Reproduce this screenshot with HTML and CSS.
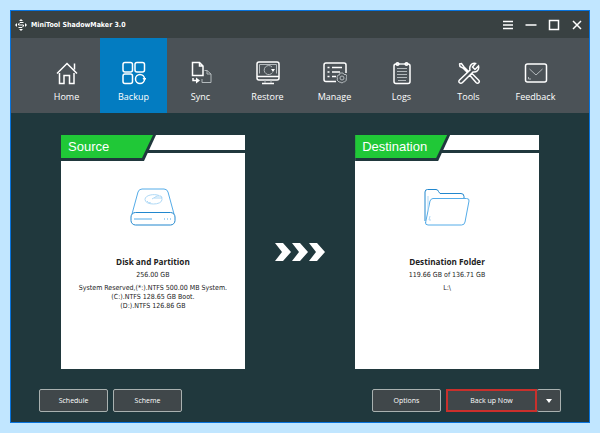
FILE: index.html
```html
<!DOCTYPE html>
<html lang="en">
<head>
<meta charset="utf-8">
<meta name="viewport" content="width=device-width, initial-scale=1">
<title>MiniTool ShadowMaker 3.0</title>
<link rel="stylesheet" href="styles.css">
</head>
<body>
<div class="window">
  <header class="titlebar">
    <svg class="logo" viewBox="0 0 12 12" aria-hidden="true">
      <path class="solid" d="M6 0l2 2H4zM6 12l2-2H4zM0 6l2-2v4zM12 6l-2-2v4z"/>
      <path d="M8.500 3.500H5L3.500 5v1h5v1L7 8.500H3.500"/>
    </svg>
    <h1 class="title">MiniTool ShadowMaker 3.0</h1>
    <div class="controls">
      <button class="control" aria-label="Menu"><svg viewBox="0 0 12 12"><path d="M1 2.500h10M1 6h10M1 9.500h10"/></svg></button>
      <button class="control" aria-label="Minimize"><svg viewBox="0 0 12 12"><path d="M.5 6h11"/></svg></button>
      <button class="control" aria-label="Maximize"><svg viewBox="0 0 12 12"><path d="M1.500 1.500h9v9h-9z"/></svg></button>
      <button class="control" aria-label="Close"><svg viewBox="0 0 12 12"><path d="M2 2l8 8M10 2l-8 8"/></svg></button>
    </div>
  </header>

  <nav class="nav">
    <a class="nav-item" href="#home">
      <svg viewBox="0 0 24 24"><path d="M2 12.500L12 2.500l10 10M19.500 2.500v6M4.500 12v10.500h4.500v-8h5.500v8h4.500V12"/></svg>
      <span>Home</span>
    </a>
    <a class="nav-item active" href="#backup" aria-current="page">
      <svg viewBox="0 0 24 24"><rect x="1" y="1.500" width="9.500" height="9.500" rx="2"/><rect x="13" y="1.500" width="9.500" height="9.500" rx="2"/><rect x="1" y="13" width="9.500" height="9.500" rx="2"/><circle cx="18" cy="18" r="4.500"/><path class="solid" d="M20.500 17H24.500l-2 3z"/></svg>
      <span>Backup</span>
    </a>
    <a class="nav-item" href="#sync">
      <svg viewBox="0 0 24 24"><path d="M3.500 1.500h7L14 5v9.500H3.500zM10.500 1.500V5H14"/><path class="faint" d="M15.500 9.500H18l4 3.500v8.500h-9V18M18 9.500V13h4"/><path d="M4 17v2.500h4"/><path class="solid" d="M7 16.500l4 3-4 3z"/></svg>
      <span>Sync</span>
    </a>
    <a class="nav-item" href="#restore">
      <svg viewBox="0 0 24 24"><rect x="1" y="1" width="22" height="18" rx="2"/><path d="M1 15.500h22M6 22.500h12"/><path class="faint" d="M3.500 12.500v-9h17v9M9 19v3M15 19v3M16 6a4.500 4.500 0 1 0 .5 5.500"/><path class="solid" d="M15 8h4l-2 3z"/></svg>
      <span>Restore</span>
    </a>
    <a class="nav-item" href="#manage">
      <svg viewBox="0 0 24 24"><path d="M13 20.500H3a2 2 0 0 1-2-2V4a2 2 0 0 1 2-2h18a2 2 0 0 1 2 2v8M4.500 6.500h2M9 6.500h10M4.500 11h2M9 11h8M4.500 15.500h2M9 15.500h4"/><path class="faint" d="M17 12h3l1 1.500h2l1 2.500-1 2 .5 1-2 2h-1L19 22l-2-1h-1l-2-2 .5-1-.5-2 1-2h1.500z"/><circle class="faint" cx="19" cy="17" r="2"/></svg>
      <span>Manage</span>
    </a>
    <a class="nav-item" href="#logs">
      <svg viewBox="0 0 24 24"><rect x="4" y="3" width="16" height="19.500" rx="2"/><circle cx="7.500" cy="3" r="1.300"/><circle cx="16.500" cy="3" r="1.300"/><path class="faint" d="M7 7.500h10M7 10.500h10M7 13.500h10M7 16.500h10M8 19.500h8M10 3h4"/></svg>
      <span>Logs</span>
    </a>
    <a class="nav-item" href="#tools">
      <svg viewBox="0 0 24 24"><path d="M2 3l2.500-.5L7 6l4.500 4.500M2.500 3L3 5.500l3 1.500 4.500 4.500M13 14.500l2-2 6.500 6.500c2 2-.5 4.500-2.500 2.500zM2.500 19L13 9c-1-3.500 1.500-7.500 5.500-6.500L15.500 6l2.500 2.500L21.500 5c1 4-2 6.500-5.500 6L5.500 21.500c-2 2-5-.5-3-2.500z"/></svg>
      <span>Tools</span>
    </a>
    <a class="nav-item" href="#feedback">
      <svg viewBox="0 0 24 24"><rect x="1.500" y="3" width="21" height="18" rx="2"/><path class="faint" d="M5.500 8l6.500 6 6.500-6M4.500 16v2H7"/></svg>
      <span>Feedback</span>
    </a>
  </nav>

  <main class="stage">
    <section class="card" aria-labelledby="source">
      <div class="card-head"><div class="tab"><h2 class="tab-label" id="source">Source</h2></div></div>
      <div class="card-body">
        <svg class="picture" viewBox="0 0 48 40" aria-hidden="true">
          <path d="M3 27L9 5q1-3 4-3h22q3 0 4 3l6 22"/><rect class="deep" x="2" y="25.500" width="44" height="12.500" rx="4.500"/><path d="M5 32h18M35 32h1M38 32h1M41 32h1"/>
          <path class="pale" d="M30 8.500c-5-2-14-.5-14 4 0 6 17 6 17 0q0-2-1-3"/><path class="pale" d="M18 14q1 2 4 2M23 12l5-3h4l1 2h-8"/>
        </svg>
        <h3 class="name">Disk and Partition</h3>
        <p class="size">256.00 GB</p>
        <p class="detail">System Reserved,(*:).NTFS 500.00 MB System.<br>(C:).NTFS 128.65 GB Boot.<br>(D:).NTFS 126.86 GB</p>
      </div>
    </section>

    <svg class="arrows" viewBox="0 0 50 20" aria-hidden="true"><path d="M0 1h8l8 9-8 9H0l7-9zM17 1h8l8 9-8 9h-8l7-9zM34 1h8l8 9-8 9h-8l7-9z"/></svg>

    <section class="card" aria-labelledby="destination">
      <div class="card-head"><div class="tab"><h2 class="tab-label" id="destination">Destination</h2></div></div>
      <div class="card-body">
        <svg class="picture" viewBox="0 0 48 40" aria-hidden="true">
          <path class="deep" d="M2 34V5q0-2.500 2.500-2.500H13q2 0 2.500 2l1.500 2h21q3 0 3 3v2"/><path d="M2.500 36L7 14q1-2.500 3-2.500h33.500q3 0 2.500 2.500l-4 21q-.500 3-3.500 3H5q-3 0-2.500-3"/><path class="pale" d="M5 9v15M7 29l-1 4h2"/>
        </svg>
        <h3 class="name">Destination Folder</h3>
        <p class="size">119.66 GB of 136.71 GB</p>
        <p class="detail">L:\</p>
      </div>
    </section>
  </main>

  <footer class="actions">
    <button class="button">Schedule</button>
    <button class="button">Scheme</button>
    <button class="button options">Options</button>
    <div class="split">
      <button class="button primary">Back up Now</button>
      <button class="button more" aria-label="More backup choices"><svg viewBox="0 0 6 4"><path d="M0 0h6L3 4z"/></svg></button>
    </div>
  </footer>
</div>
</body>
</html>
```

FILE: styles.css
```css
* {
  box-sizing: border-box;
}

body {
  margin: 0;
  min-height: 100vh;
  display: flex;
  padding: 10px;
  background: #c1e6ff;
  color: #fff;
  font-family: "Open Sans", "Noto Sans", sans-serif;
  font-size: 9px;
}

h1, h2, h3, p {
  margin: 0;
  font-weight: normal;
}

button {
  font: inherit;
  color: inherit;
}

svg {
  display: block;
  fill: none;
  stroke: #fff;
}

.window {
  flex: 1;
  display: flex;
  flex-direction: column;
  border: 1px solid #0873dc;
  background: #20383d;
}

.titlebar {
  display: flex;
  align-items: center;
  height: 27px;
  padding-left: 4px;
  background: #394142;
}

.logo {
  width: 12px;
  height: 12px;
}

.solid {
  fill: #fff;
  stroke: none;
}

.title {
  margin-left: 4px;
  font: bold 7px "DejaVu Sans Condensed", "DejaVu Sans", sans-serif;
}

.controls {
  display: flex;
  margin-left: auto;
}

.control {
  width: 23px;
  padding: 0 6px 0 5px;
  border: 0;
  background: none;
}

.control svg {
  width: 12px;
  height: 12px;
  stroke-width: 1.5;
}

.nav {
  display: grid;
  grid-template-columns: repeat(8, 1fr);
  height: 75px;
  padding: 0 20px 0 22px;
  background: #4b5257;
}

.nav-item {
  display: flex;
  flex-direction: column;
  align-items: center;
  gap: 6px;
  padding-top: 23px;
  color: #fff;
  line-height: 12px;
  text-decoration: none;
}

.nav-item svg {
  width: 24px;
  height: 24px;
  stroke-width: 1.5;
}

.nav-item .faint {
  stroke: #b3b9bc;
  stroke-width: 1;
}

.active {
  background: #037cc1;
}

.stage {
  flex: 1;
  display: grid;
  grid-template-columns: 5fr 3fr 5fr;
  padding: 22px 50px 0;
}

.card {
  background: #fff;
  color: #222;
}

.card-head {
  background: linear-gradient(#fff 15px, #20383d 15px, #20383d 18px, #fff 18px);
}

.tab {
  width: 95px;
  height: 26px;
  background: #20383d;
  clip-path: polygon(0 0, 100% 0, 83px 100%, 0 100%);
}

.tab-label {
  width: 92px;
  height: 23px;
  padding-left: 7px;
  background: #20c837;
  clip-path: polygon(0 0, 100% 0, 81px 100%, 0 100%);
  color: #fff;
  font: 13px/23px "Liberation Sans", Arial, sans-serif;
}

.card-body {
  display: flex;
  flex-direction: column;
  align-items: center;
  padding-top: 26px;
  font: 7px/9px "DejaVu Sans Condensed", "DejaVu Sans", sans-serif;
  text-align: center;
}

.picture {
  width: 48px;
  height: 40px;
  stroke: #55ace8;
}

.picture .deep {
  stroke: #2187ce;
}

.picture .pale {
  stroke: #afd9f6;
}

.name {
  margin-top: 30px;
  font-family: "Open Sans", "Noto Sans", sans-serif;
  font-weight: bold;
}

.size {
  margin-top: 5px;
}

.detail {
  margin-top: 4px;
  white-space: nowrap;
}

.arrows {
  width: 50px;
  height: 20px;
  place-self: center;
  fill: #fff;
  stroke: none;
}

.actions {
  display: flex;
  gap: 5px;
  padding: 20px 28px 10px;
}

.button {
  width: 69px;
  height: 23px;
  padding: 0;
  border: 1px solid #a9b1b0;
  border-radius: 2px;
  background: #40474a;
  font-size: 7px;
}

.options {
  margin-left: auto;
}

.split {
  display: flex;
}

.split .primary {
  width: 91px;
  border: 2px solid #c9302c;
  border-radius: 0;
}

.split .more {
  display: grid;
  place-items: center;
  width: 24px;
  border-left: 0;
}

.more svg {
  width: 6px;
  height: 4px;
  fill: #fff;
  stroke: none;
}
```
